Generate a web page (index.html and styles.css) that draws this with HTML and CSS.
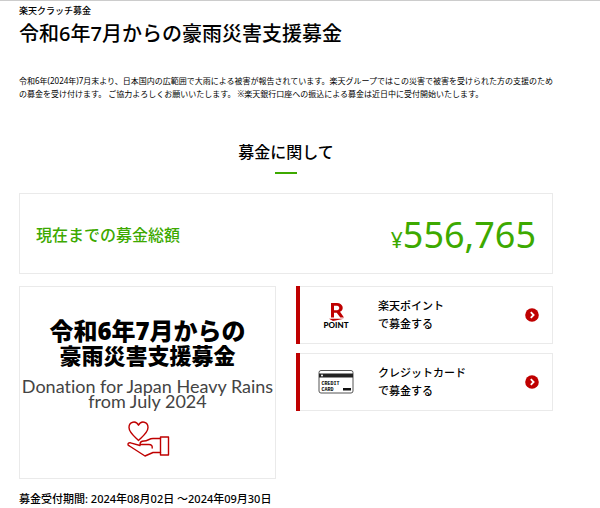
FILE: index.html
```html
<!DOCTYPE html>
<html lang="ja">
<head>
<meta charset="utf-8">
<meta name="viewport" content="width=device-width, initial-scale=1">
<title>令和6年7月からの豪雨災害支援募金</title>
<link rel="stylesheet" href="styles.css">
</head>
<body>
<main class="page">
  <header class="intro">
    <p class="service">楽天クラッチ募金</p>
    <h1 class="title">令和6年7月からの豪雨災害支援募金</h1>
    <p class="lead">令和6年(2024年)7月末より、日本国内の広範囲で大雨による被害が報告されています。楽天グループではこの災害で被害を受けられた方の支援のための募金を受け付けます。 ご協力よろしくお願いいたします。 ※楽天銀行口座への振込による募金は近日中に受付開始いたします。</p>
  </header>

  <h2 class="heading">募金に関して</h2>

  <section class="total">
    <span class="total-label">現在までの募金総額</span>
    <span class="total-amount"><span class="yen">¥</span>556,765</span>
  </section>

  <div class="columns">
    <section class="banner">
      <p class="banner-ja banner-date">令和6年7月からの</p>
      <p class="banner-ja">豪雨災害支援募金</p>
      <p class="banner-en">Donation for Japan Heavy Rains<br>from July 2024</p>
      <svg class="banner-icon" viewBox="0 0 44 38" fill="none" stroke="#bf0000" stroke-width="1.4" stroke-linejoin="round" stroke-linecap="round" aria-hidden="true">
        <path d="M12.500 20.500C8.500 16.500 3 12.500 3 7.500C3 1.500 10 .2 12.500 5.200C15 .2 22 1.500 22 7.500C22 12.500 16.500 16.500 12.500 20.500Z"/>
        <path d="M34.500 18.500H27C23 18.500 22 21 18 21C15.500 21 14 22 14 24.500H23C25.500 24.500 26.500 26 26.200 28"/>
        <path d="M14 25.500L4.500 22.800C1.500 22.500 1 24.800 3.500 26L19 36L27 32.500H34.500"/>
        <rect x="34.500" y="17" width="8" height="18"/>
      </svg>
    </section>
    <nav class="methods">
      <a class="method" href="#point">
        <svg class="method-icon" viewBox="0 0 36 28" aria-hidden="true">
          <path fill="#bf0000" fill-rule="evenodd" d="M13 16.500V2H19C25.500 2 26.500 9.300 22 10.800L26 16.500H22.300L18.700 11.800H16V16.500ZM16 4.800V9.300H19C22 9.300 22 4.800 19 4.800ZM11 17.800H26L15 20Z"/>
          <text class="point-text" x="18" y="27" text-anchor="middle">POINT</text>
        </svg>
        <span class="method-name">楽天ポイント<br>で募金する</span>
        <svg class="arrow" viewBox="0 0 14 14" aria-hidden="true"><circle cx="7" cy="7" r="6.800" fill="#bf0000"/><path d="M5.800 4.200L8.600 7L5.800 9.800" fill="none" stroke="#fff" stroke-width="1.800"/></svg>
      </a>
      <a class="method" href="#card">
        <svg class="method-icon" viewBox="0 0 36 28" aria-hidden="true">
          <rect x="1" y="2.500" width="34" height="22.500" rx="2" fill="#fff" stroke="#555"/>
          <path fill="#222" d="M1 5.500H35V9.500H1Z"/>
          <circle cx="4" cy="7.500" r="1" fill="#fff"/>
          <text class="card-text" x="3.500" y="17">CREDIT</text>
          <text class="card-text" x="3.500" y="22.500">CARD</text>
          <rect x="25" y="20" width="8" height="2.500" fill="#111"/>
        </svg>
        <span class="method-name">クレジットカード<br>で募金する</span>
        <svg class="arrow" viewBox="0 0 14 14" aria-hidden="true"><circle cx="7" cy="7" r="6.800" fill="#bf0000"/><path d="M5.800 4.200L8.600 7L5.800 9.800" fill="none" stroke="#fff" stroke-width="1.800"/></svg>
      </a>
    </nav>
  </div>

  <p class="period">募金受付期間: 2024年08月02日 ～2024年09月30日</p>
</main>
</body>
</html>
```

FILE: styles.css
```css
* {
  box-sizing: border-box;
}

body {
  margin: 0;
  background: #fff;
  color: #000;
  font-family: "Noto Sans", "Noto Sans CJK JP", sans-serif;
  font-size: 11px;
}

p, h1, h2 {
  margin: 0;
}

.page {
  border-top: 1px solid #ccc;
  padding: 3px 47px 0 19px;
}

.service {
  font-size: 9px;
  font-weight: 500;
  line-height: 14px;
}

.title {
  font-size: 20px;
  font-weight: 500;
  line-height: 32px;
}

.lead {
  margin-top: 24px;
  font-size: 8px;
  line-height: 13px;
}

.heading {
  margin-top: 40px;
  font-size: 16px;
  font-weight: 500;
  line-height: 24px;
  text-align: center;
}

.heading::after {
  content: "";
  display: block;
  width: 22px;
  height: 2px;
  margin: 8px auto 0;
  background: #3da900;
}

.total {
  display: flex;
  align-items: center;
  justify-content: space-between;
  margin-top: 19px;
  padding: 16px 16px 13px;
  border: 1px solid #eaeaea;
  color: #3da900;
}

.total-label {
  font-size: 16px;
  font-weight: 500;
  line-height: 24px;
}

.total-amount {
  font-size: 36px;
  line-height: 50px;
}

.yen {
  font-size: 21px;
  line-height: 1;
}

.columns {
  display: grid;
  grid-template-columns: 1fr 1fr;
  align-items: start;
  gap: 20px;
  margin-top: 12px;
}

.banner {
  padding: 32px 0 20px;
  border: 1px solid #eaeaea;
  text-align: center;
}

.banner-ja {
  font-size: 22px;
  font-weight: 900;
  line-height: 24px;
}

.banner-date {
  font-size: 24px;
}

.banner-en {
  margin-top: 12px;
  color: #444;
  font-family: Lato, sans-serif;
  font-size: 18px;
  font-variant-ligatures: none;
  line-height: 15px;
  white-space: nowrap;
}

.banner-icon {
  display: block;
  width: 44px;
  height: 38px;
  margin: 11px auto 0;
}

.methods {
  display: grid;
  gap: 9px;
}

.method {
  display: flex;
  align-items: center;
  margin-left: 4px;
  padding: 10px 13px 10px 18px;
  border: 1px solid #eaeaea;
  border-left: 0;
  box-shadow: -4px 0 #bf0000;
  color: #000;
  font-weight: 500;
  line-height: 18px;
  text-decoration: none;
}

.method-icon {
  width: 36px;
  height: 28px;
}

.method-name {
  flex: 1;
  margin-left: 24px;
}

.arrow {
  width: 14px;
  height: 14px;
}

.point-text {
  font: 900 8px Lato, sans-serif;
}

.card-text {
  font: 700 5px "Liberation Mono", monospace;
}

.period {
  margin-top: 12px;
  font-weight: 500;
  line-height: 16px;
}
```
